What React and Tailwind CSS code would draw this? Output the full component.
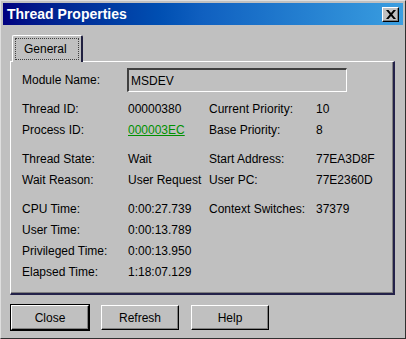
import React from "react";

const rows = [
  [
    ["Thread ID:", "00000380", "Current Priority:", "10"],
    ["Process ID:", "000003EC", "Base Priority:", "8", true],
  ],
  [
    ["Thread State:", "Wait", "Start Address:", "77EA3D8F"],
    ["Wait Reason:", "User Request", "User PC:", "77E2360D"],
  ],
  [
    ["CPU Time:", "0:00:27.739", "Context Switches:", "37379"],
    ["User Time:", "0:00:13.789"],
    ["Privileged Time:", "0:00:13.950"],
    ["Elapsed Time:", "1:18:07.129"],
  ],
];

const Button = ({ children, isDefault }) => (
  <div className={isDefault ? "border border-black" : "border border-transparent"}>
    <button className="w-[78px] h-[25px] flex items-center justify-center bg-[#c0c0c0] border-t border-l border-t-white border-l-white border-r border-b border-r-black border-b-black shadow-[inset_-1px_-1px_0_#808080] text-[12px] text-black">
      {children}
    </button>
  </div>
);

const App = () => {
  return (
    <div
      className="w-[406px] h-[339px] bg-[#c0c0c0] border border-t-[#dfdfdf] border-l-[#dfdfdf] border-r-[#303030] border-b-[#303030] p-[2px] flex flex-col"
      style={{ fontFamily: '"Liberation Sans", Arial, sans-serif' }}
    >
      {/* title bar */}
      <div className="h-[22px] flex items-center justify-between bg-linear-to-r from-[#000080] via-[#1060c0] to-[#3a9ee0]">
        <span className="pl-[4px] text-white font-bold text-[14px] leading-none">Thread Properties</span>
        <div className="mr-[4px] w-[17px] h-[15px] bg-[#c0c0c0] border-t border-l border-t-white border-l-white border-r border-b border-r-black border-b-black shadow-[inset_-1px_-1px_0_#808080] flex items-center justify-center">
          <svg width="10" height="9" viewBox="0 0 10 9">
            <path d="M0 0h2.5L5 3 7.5 0H10L6.3 4.5 10 9H7.5L5 6 2.5 9H0l3.7-4.5z" fill="#000" />
          </svg>
        </div>
      </div>

      {/* tab */}
      <div className="mt-[10px] ml-[9px] relative z-10 -mb-[1px] w-[71px] h-[27px] bg-[#c0c0c0] border-t border-l border-t-white border-l-white border-r-2 border-r-[#202040] rounded-t-[2px] p-[2px]">
        <div className="h-full border border-dotted border-[#404040] flex items-center pl-[8px] text-[12px] text-black">
          General
        </div>
      </div>

      {/* panel */}
      <div className="ml-[7px] w-[385px] h-[234px] border-t border-l border-t-white border-l-white border-r-2 border-b-2 border-r-[#24224a] border-b-[#24224a] shadow-[inset_-1px_-1px_0_#808080] pl-[11px] pt-[6px] text-[12px] text-black">
        <div className="flex items-center h-[24px]">
          <span className="w-[105px]">Module Name:</span>
          <div className="w-[220px] h-[24px] border-t-2 border-l-2 border-t-[#404040] border-l-[#404040] border-r border-b border-r-white border-b-white flex items-center pl-[2px]">
            MSDEV
          </div>
        </div>
        <div className="flex flex-col gap-[8px] mt-[6px]">
          {rows.map((group, gi) => (
            <div key={gi} className="flex flex-col">
              {group.map(([l1, v1, l2, v2, link], ri) => (
                <div key={ri} className="grid grid-cols-[106px_81px_107px_1fr] h-[21px] items-center">
                  <span>{l1}</span>
                  <span className={link ? "text-[#009000] underline" : ""}>{v1}</span>
                  <span>{l2}</span>
                  <span>{v2}</span>
                </div>
              ))}
            </div>
          ))}
        </div>
      </div>

      {/* buttons */}
      <div className="flex gap-[10px] ml-[7px] mt-[9px]">
        <Button isDefault>Close</Button>
        <Button>Refresh</Button>
        <Button>Help</Button>
      </div>
    </div>
  );
};

export default App;
